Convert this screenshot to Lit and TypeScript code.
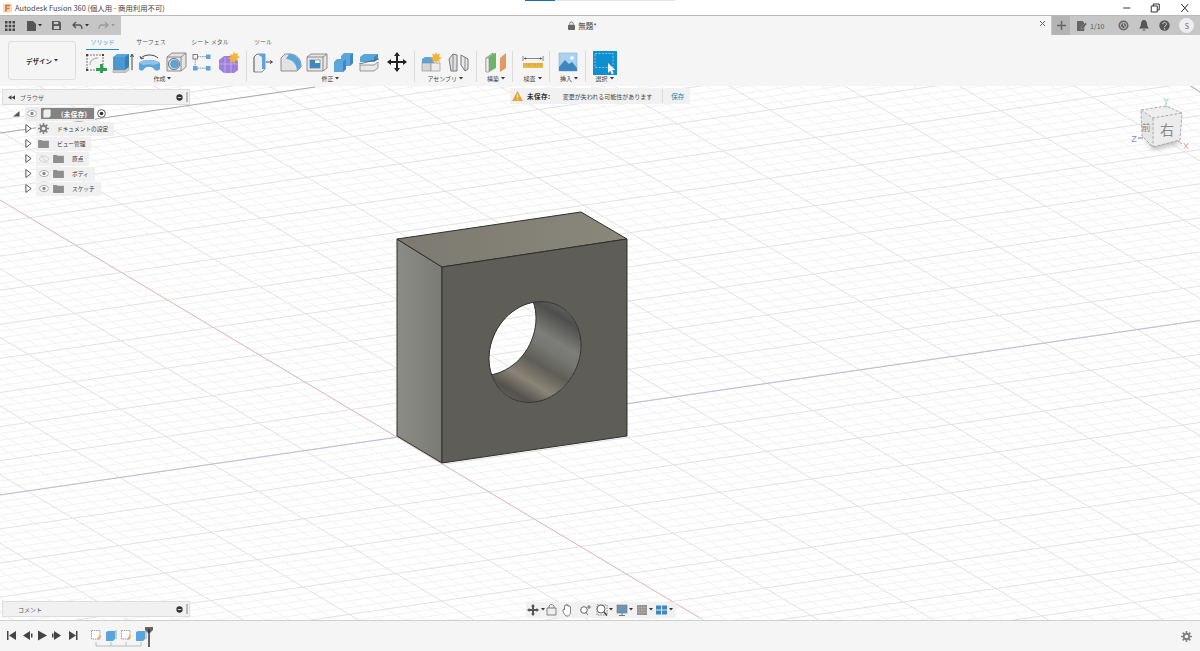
import { LitElement, html, css, svg } from 'lit';
import { customElement } from 'lit/decorators.js';

// ---- small icons, drawn to match the Fusion ribbon ----
const BLUE = '#5aa5dc';
const BLUE_D = '#3f87c0';

const icons: Record<string, unknown> = {
  sketch: svg`<rect x="2" y="4" width="16" height="15" fill="#f4f4f4" stroke="#555" stroke-width=".8" stroke-dasharray="2 1"/>
    <path d="M5 14c0-4 3-7 8-7" fill="none" stroke="#888" stroke-width=".8"/>
    <rect x="1" y="3" width="2" height="2" fill="#444"/><rect x="17" y="3" width="2" height="2" fill="#444"/><rect x="1" y="18" width="2" height="2" fill="#444"/>
    <path d="M15 13h3v4h4v3h-4v3h-3v-3h-4v-3h4z" fill="#2f9e50"/>`,
  extrude: svg`<path d="M1 6l4-3h12v13l-4 3H1z" fill="${BLUE}"/><path d="M1 6h12v13H1z" fill="#4b97d2"/><path d="M13 6l4-3v13l-4 3z" fill="#3a7fb5"/>
    <path d="M1 19h12l4-3v3l-4 3H1z" fill="#c9c9c9" stroke="#888" stroke-width=".4"/>
    <path d="M20 19V4m-1.600 2L20 3l1.600 3" fill="none" stroke="#333" stroke-width=".9"/>`,
  revolve: svg`<path d="M1 12c2-4 18-4 21 0v6c-2 2-5 2-6 0-2-3-8-3-10 0-1 2-4 2-5 0z" fill="${BLUE}"/>
    <path d="M1 12c2-2 5-3 10-3s9 1 11 3c-2 1-5 1-6 2-3-1-7-1-10 0-2-1-4-1-5-2z" fill="#8fc3e9"/>
    <path d="M3 7c4-4 13-4 17 0" fill="none" stroke="#333" stroke-width=".9"/><path d="M2 5l1 3 3-1" fill="none" stroke="#333" stroke-width=".8"/>`,
  hole: svg`<path d="M2 6l5-4h14v14l-5 4H2z" fill="#e4e4e4" stroke="#777" stroke-width=".8"/><path d="M2 6h14v14M16 6l5-4" fill="none" stroke="#777" stroke-width=".8"/>
    <circle cx="9" cy="13" r="5.600" fill="#bcd6ea" stroke="#666" stroke-width=".8"/><circle cx="9.600" cy="13" r="3.800" fill="${BLUE}" stroke="#4d7fa8" stroke-width=".5"/>`,
  pattern: svg`<rect x="2" y="3.500" width="4.500" height="4.500" fill="#f4f4f4" stroke="#666" stroke-width=".8"/><rect x="15" y="3.500" width="4.500" height="4.500" fill="${BLUE}"/>
    <rect x="2" y="15" width="4.500" height="4.500" fill="${BLUE}"/><rect x="15" y="15" width="4.500" height="4.500" fill="${BLUE}"/>
    <path d="M6.500 5.700h8.500M4.200 8v7M6.500 17.200h8.500" stroke="#777" stroke-width=".8" stroke-dasharray="1.500 .8"/>`,
  sparkle: svg`<path d="M1 9l5-4h9l5 5v9l-4 3H6l-5-4z" fill="#a07fdc"/><path d="M7 6v16M1 13h19M13 6v16" stroke="#c8b5ea" stroke-width=".8"/>
    <path d="M16 0l1.200 3 3-1-1 3 3 1.200-3 1.200 1 3-3-1L16 13l-1.200-2.600-3 1 1-3-3-1.200 3-1.200-1-3 3 1z" fill="#f4b43c"/>`,
  press: svg`<path d="M1 6l3-3h8v15l-3 3H1z" fill="#eee" stroke="#666" stroke-width=".7"/><path d="M4 3h8v15H9V6z" fill="${BLUE}"/><path d="M4 3L1 6v15" fill="none" stroke="#666" stroke-width=".7"/>
    <path d="M13 11h6m-2-1.600L19.500 11 17 12.600" fill="none" stroke="#333" stroke-width=".9"/>`,
  fillet: svg`<path d="M1 7l4-4h5c6 0 11 5 11 11v2l-4 4H1z" fill="#e2e2e2" stroke="#777" stroke-width=".8"/>
    <path d="M9 3c6 0 12 5 12 12l-4 5c0-7-5-12-11-12z" fill="${BLUE}"/>`,
  shell: svg`<path d="M1 6l4-3h16v14l-4 3H1z" fill="#e6e6e6" stroke="#777" stroke-width=".8"/><path d="M1 6h16v14M17 6l4-3" fill="none" stroke="#777" stroke-width=".8"/>
    <rect x="4" y="9" width="10" height="8" fill="#fff" stroke="#666" stroke-width=".6"/><path d="M4 9h5v3h5v5H4z" fill="${BLUE_D}"/>`,
  combine: svg`<path d="M8 5l3-3h9v10l-3 3H8z" fill="${BLUE}"/><path d="M17 15l3-3V2l-3 3z" fill="#3f87c0"/>
    <path d="M1 11l3-3h9v10l-3 3H1z" fill="${BLUE}"/><path d="M10 21l3-3V8l-3 3z" fill="#3f87c0"/>`,
  split: svg`<path d="M1 6l4-3h14v5l-4 3H1z" fill="${BLUE}"/><path d="M15 11l4-3V3l-4 3z" fill="#3f87c0"/>
    <path d="M0 13l20-5" stroke="#555" stroke-width=".8" fill="none"/>
    <path d="M1 14h14l4-3v6l-4 3H1z" fill="#e8e8e8" stroke="#777" stroke-width=".7"/>`,
  move: svg`<path d="M11 1l3 4h-2v5h5V8l4 3-4 3v-2h-5v5h2l-3 4-3-4h2v-5H5v2l-4-3 4-3v2h5V5H8z" fill="#222"/>`,
  component: svg`<path d="M1 8l3-2h9v6H1z" fill="${BLUE}"/><rect x="1" y="12" width="9" height="8" fill="#d6d6d6" stroke="#888" stroke-width=".6"/>
    <rect x="10" y="12" width="9" height="8" fill="#ececec" stroke="#888" stroke-width=".6"/>
    <path d="M15 1l1.200 2.600 2.800-1-1 2.800L21 7l-3 1.200 1 2.800-2.800-1L15 13l-1.200-3-2.800 1 1-2.800L9 7l3-1.600-1-2.800 2.800 1z" fill="#f4b43c"/>`,
  joint: svg`<path d="M1 8l4-5 4 1v16H3z" fill="#dedede" stroke="#777" stroke-width="1"/><path d="M5 3v16" stroke="#777" stroke-width=".8"/>
    <path d="M13 4l7 4v10l-3 2-4-6z" fill="#e8e8e8" stroke="#777" stroke-width="1"/><path d="M17 6v14" stroke="#777" stroke-width=".8"/>`,
  plane: svg`<path d="M1 7l7-5v15l-7 4z" fill="#9fcf8f" stroke="#777" stroke-width=".6"/><path d="M4 6l6-4h1v15l-7 4z" fill="#6db36a"/><path d="M1 7h3v14H1z" fill="#eee" stroke="#888" stroke-width=".6"/>
    <path d="M15 7l6-5v15l-6 4z" fill="#e39a62"/>`,
  measure: svg`<rect x="1" y="12" width="20" height="5" fill="#e9b84a"/><path d="M4 12v2M7 12v3M10 12v2M13 12v3M16 12v2M19 12v3" stroke="#a88428" stroke-width=".5"/>
    <path d="M1 5v5M21 5v5M2 7.500h18" fill="none" stroke="#555" stroke-width=".7"/><path d="M2 7.500l2-1.200v2.400zM20 7.500l-2-1.200v2.400z" fill="#555"/>`,
  insert: svg`<rect x="1" y="2" width="18" height="18" fill="#a9d2ef" stroke="#8ab2d0" stroke-width=".6"/><path d="M1 20v-4l6-7 4 4 3-2 5 6v3z" fill="#3f87c0"/><circle cx="14" cy="7" r="1.800" fill="#fff"/>`,
};

const caret = svg`<path d="M0 0h4L2 2.400z" fill="#333"/>`;
const folder = html`<svg viewBox="0 0 12 10" width="11" height="9"><path d="M0 1h4l1 1h7v8H0z" fill="#8e8e8e"/></svg>`;
const eye = html`<svg viewBox="0 0 12 8" width="10" height="7"><path d="M0 4c3-5 9-5 12 0-3 5-9 5-12 0z" fill="#fff" stroke="#999" stroke-width="1"/><circle cx="6" cy="4" r="2" fill="#888"/></svg>`;
const eyeOff = html`<svg viewBox="0 0 12 10" width="10" height="8"><path d="M0 5c3-5 9-5 12 0-3 5-9 5-12 0z" fill="none" stroke="#ccc" stroke-width="1"/><path d="M2 0l8 10" stroke="#ccc"/></svg>`;
const gear = html`<svg viewBox="0 0 12 12" width="11" height="11"><circle cx="6" cy="6" r="3" fill="none" stroke="#808080" stroke-width="2"/><path d="M6 0v2.400M6 9.600V12M0 6h2.400M9.600 6H12M1.800 1.800l1.700 1.700M8.500 8.500l1.700 1.700M10.200 1.800L8.500 3.500M3.500 8.500l-1.700 1.700" stroke="#808080" stroke-width="1.700"/></svg>`;
const tri = html`<svg class="tri" viewBox="0 0 8 11" width="7" height="11"><path d="M1 1l6 4.500L1 10z" fill="#fff" stroke="#444" stroke-width="1"/></svg>`;
const pin = html`<svg viewBox="0 0 8 8" width="7" height="7"><circle cx="4" cy="4" r="3.600" fill="#333"/><path d="M2 4h4" stroke="#eee" stroke-width="1"/></svg>`;

const ribbon = [
  { label: '作成', items: ['sketch', 'extrude', 'revolve', 'hole', 'pattern', 'sparkle'], cls: 'group' },
  { label: '修正', items: ['press', 'fillet', 'shell', 'combine', 'split', 'move'], cls: 'group' },
  { label: 'アセンブリ', items: ['component', 'joint'], cls: 'group' },
  { label: '構築', items: ['plane'], cls: 'group wide' },
  { label: '検査', items: ['measure'], cls: 'group wide' },
  { label: '挿入', items: ['insert'], cls: 'group wide' },
];

const tabs = [
  { label: 'ソリッド', w: 33, on: true },
  { label: 'サーフェス', w: 64, on: false },
  { label: 'シート メタル', w: 54, on: false },
  { label: 'ツール', w: 52, on: false },
];

const tree = [
  { label: 'ドキュメントの設定', eye: null, icon: gear },
  { label: 'ビュー管理', eye: null, icon: folder },
  { label: '原点', eye: eyeOff, icon: folder },
  { label: 'ボディ', eye, icon: folder },
  { label: 'スケッチ', eye, icon: folder },
];

// grid lattice, measured from the origin at the box corner
const OX = 397;
const OY = 437;
const RED = 0.597;
const BLU = -0.1455;

function gridLines(major: boolean) {
  const out: unknown[] = [];
  for (let k = -40; k <= 80; k++) {
    if ((k % 5 === 0) !== major) continue;
    const x0 = OX + (k * 92.5) / 5;
    const y0 = OY - (k * 13.45) / 5;
    out.push(svg`<line x1="-50" x2="1250" y1=${y0 + RED * (-50 - x0)} y2=${y0 + RED * (1250 - x0)}/>`);
  }
  for (let k = -70; k <= 50; k++) {
    if ((k % 5 === 0) !== major) continue;
    const x0 = OX + (k * 46) / 5;
    const y0 = OY + (k * 27.4) / 5;
    out.push(svg`<line x1="-50" x2="1250" y1=${y0 + BLU * (-50 - x0)} y2=${y0 + BLU * (1250 - x0)}/>`);
  }
  return out;
}

// the bored hole is a circle on the front face, skewed with the face
function ring(cx: number, cy: number) {
  const p: string[] = [];
  for (let i = 0; i < 72; i++) {
    const t = (i / 72) * Math.PI * 2;
    const x = cx + 46 * Math.cos(t);
    const y = cy - 6.6 * Math.cos(t) + 50 * Math.sin(t);
    p.push(`${x.toFixed(1)} ${y.toFixed(1)}`);
  }
  return `M${p.join('L')}Z`;
}

@customElement('app-root')
export class AppRoot extends LitElement {
  static styles = css`
    :host {
      display: flex;
      flex-direction: column;
      width: 1200px;
      height: 651px;
      overflow: hidden;
      background: #fff;
      font-family: 'Noto Sans CJK JP', 'Noto Sans', sans-serif;
      color: #444;
      font-size: 6px;
    }
    svg { display: block; flex: none; }
    .titlebar {
      height: 15px;
      display: flex;
      align-items: center;
      padding-left: 3px;
      font-size: 7.4px;
      position: relative;
      color: #444;
    }
    .titlebar .logo { margin-right: 3px; }
    .titlebar .progress {
      position: absolute; left: 525px; top: 0; width: 150px; height: 1px; background: #e6e6e6;
    }
    .titlebar .progress i { display: block; width: 30px; height: 1px; background: #1a6fb0; }
    .winbtns { margin-left: auto; display: flex; padding-right: 2px; }
    .winbtns svg { width: 28.5px; height: 14px; }
    .tabbar {
      height: 20px;
      background: #c6c6c6;
      display: flex;
      align-items: stretch;
      border-top: 1px solid #bbb;
      box-sizing: border-box;
    }
    .tabbar .tools { width: 121px; display: flex; align-items: center; padding-left: 5px; box-sizing: border-box; }
    .doc {
      width: 930px;
      background: #f5f5f5;
      display: flex;
      align-items: center;
      position: relative;
      justify-content: center;
      font-size: 7.5px;
      gap: 3px;
      padding-right: 7px;
      box-sizing: border-box;
    }
    .doc .x { position: absolute; right: 5px; top: 4px; }
    .plus { width: 18px; margin-left: 1px; background: #b4b4b4; display: flex; align-items: center; justify-content: center; }
    .status { flex: 1; display: flex; align-items: center; padding-left: 7px; color: #555; font-size: 7px; }
    .status .clock { margin-left: 14px; }
    .status .next { margin-left: 10px; }
    .avatar {
      width: 15px; height: 15px; border-radius: 50%; background: #eee; color: #666;
      display: flex; align-items: center; justify-content: center; font-size: 7px; margin-left: 9px;
    }
    .toolbar {
      height: 51px;
      background: #f5f5f5;
      display: flex;
      box-sizing: border-box;
    }
    .design {
      width: 68px; height: 39px; margin: 6px 0 0 8px; flex: none;
      border: 1px solid #dedede; border-radius: 3px; box-sizing: border-box;
      display: flex; align-items: center; justify-content: center; gap: 2px;
      font-weight: 700; font-size: 6.5px; color: #333;
    }
    .ribbon { margin-left: 3px; display: flex; flex-direction: column; }
    .tabs { display: flex; margin-left: 7px; height: 15px; }
    .tab { text-align: center; line-height: 13px; font-size: 6px; color: #555; box-sizing: border-box; height: 15px; }
    .tab.on { color: #3a9ac8; border-bottom: 1.5px solid #2b8cba; }
    .groups { display: flex; height: 34px; padding-top: 1px; box-sizing: border-box; }
    .group {
      padding: 0 6px;
      border-right: 1px solid #dcdcdc;
      display: flex;
      flex-direction: column;
      height: 31px;
    }
    .group.wide { padding: 0 5px 0 8.5px; }
    .group.last { border-right: none; padding-left: 6.5px; }
    .icons { display: flex; gap: 4.6px; height: 22px; }
    .icons svg { width: 22px; height: 22px; }
    .glabel {
      margin-top: 1px; display: flex; align-items: center; justify-content: center; gap: 2px;
      height: 9px; font-size: 6px; color: #444; white-space: nowrap;
    }
    .glabel.tight { margin-top: -1px; }
    .select {
      width: 24px; height: 24px; background: #0f8fd0; position: relative;
    }
    .canvas { flex: 1; position: relative; overflow: hidden; background: #fff; }
    .scene { position: absolute; left: 0; top: 0; }
    .minor { stroke: #f2f2f2; stroke-width: 1; }
    .major { stroke: #e2e2e2; stroke-width: 1; }
    .panel {
      position: absolute;
      left: 2px;
      width: 188px;
      height: 16px;
      background: #f1f1f1;
      border: 1px solid #ddd;
      box-sizing: border-box;
      display: flex;
      align-items: center;
      padding: 0 1px 0 5px;
      font-size: 6px;
      color: #555;
    }
    .panel.browser { top: 3px; }
    .panel.comment { bottom: 3px; padding-left: 15px; }
    .panel .end { margin-left: auto; display: flex; align-items: center; gap: 3px; }
    .panel .grip { width: 2px; height: 10px; background: #bbb; }
    .panel .rew { margin-right: 5px; }
    .tree { position: absolute; left: 0; top: 20px; display: flex; flex-direction: column; }
    .root { display: flex; align-items: center; height: 15px; padding-left: 13px; }
    .root .wrap { display: flex; align-items: center; background: #ececec; height: 14px; margin-left: 5px; padding: 0 1px 0 2px; }
    .root .sel {
      width: 53px; height: 11px; background: #838383; color: #fff; display: flex; align-items: center;
      font-weight: 700; font-size: 6.5px; letter-spacing: .4px; margin-left: 4px; padding-left: 2px; box-sizing: border-box; gap: 10px;
      white-space: nowrap;
    }
    .root .radio { margin-left: 2px; }
    .row { display: flex; align-items: center; height: 15px; padding-left: 25px; }
    .row .cell {
      margin-left: 4px; height: 14px; background: #f0f0f0; display: flex; align-items: center;
      padding-right: 6px; color: #333; font-size: 5.7px; white-space: nowrap;
    }
    .slot { width: 15px; display: flex; justify-content: center; }
    .cell .txt { margin-left: 6px; }
    .warn {
      position: absolute; left: 510px; top: 2px; height: 16px; width: 180px;
      background: #f1f1f1; display: flex; align-items: center; padding-left: 2px; box-sizing: border-box;
      font-size: 6px; color: #444; white-space: nowrap;
    }
    .warn b { margin-left: 4px; font-size: 6.5px; letter-spacing: .5px; color: #333; }
    .warn .msg { margin-left: 12px; }
    .warn .save { margin-left: 10px; border-left: 1px solid #dcdcdc; padding-left: 8px; color: #1f7ea8; line-height: 14px; font-size: 6.5px; }
    .nav {
      position: absolute; left: 526px; bottom: 2px; width: 150px; height: 16px;
      background: #f1f1f1; display: flex; align-items: center;
    }
    .cube { position: absolute; left: 1125px; top: 8px; }
    .timeline {
      height: 31px;
      background: #f5f5f5;
      border-top: 1px solid #cfcfcf;
      box-sizing: border-box;
      display: flex;
      align-items: center;
      position: relative;
    }
    .timeline .gearbtn { margin-left: auto; margin-right: 8px; }
    .ml2 { margin-left: 2px; }
    .ml9 { margin-left: 9px; }
    .ml10 { margin-left: 10px; }
    .ml11 { margin-left: 11px; }
    .ml12 { margin-left: 12px; }
    .ml3 { margin-left: 3px; }
  `;

  private _ribbon() {
    return html`<div class="groups">
      ${ribbon.map(
        (g) => html`<div class=${g.cls}>
          <div class="icons">
            ${g.items.map((n) => html`<svg viewBox="0 0 22 22">${icons[n]}</svg>`)}
          </div>
          <div class="glabel">${g.label}<svg viewBox="0 0 4 3" width="4" height="3">${caret}</svg></div>
        </div>`,
      )}
      <div class="group wide last">
        <div class="select">
          <svg viewBox="0 0 24 24" width="24" height="24">
            <rect x="2" y="2.500" width="18" height="14" fill="none" stroke="#9bd6f2" stroke-width=".8" stroke-dasharray="2 1.400"/>
            <path d="M15 12v10l2.400-2.200 1.500 3.600 1.800-.8-1.500-3.400 3-.2z" fill="#fff"/>
          </svg>
        </div>
        <div class="glabel tight">選択<svg viewBox="0 0 4 3" width="4" height="3">${caret}</svg></div>
      </div>
    </div>`;
  }

  private _scene() {
    const outer = ring(535, 352);
    const far = ring(490, 325);
    return html`<svg class="scene" width="1200" height="534" viewBox="0 86 1200 534">
      <defs>
        <linearGradient id="bore" gradientUnits="userSpaceOnUse" x1="570" y1="300" x2="503" y2="411">
          <stop offset="0" stop-color="#6f6f69"/>
          <stop offset=".15" stop-color="#4e4f4d"/>
          <stop offset=".33" stop-color="#7d7d79"/>
          <stop offset=".42" stop-color="#767672"/>
          <stop offset=".55" stop-color="#5f5d56"/>
          <stop offset=".70" stop-color="#8a8577"/>
          <stop offset=".83" stop-color="#54524c"/>
          <stop offset="1" stop-color="#6f6d65"/>
        </linearGradient>
        <linearGradient id="side" x1="0" x2="1" y1="0" y2="0">
          <stop offset="0" stop-color="#8b8c86"/><stop offset="1" stop-color="#7b7b75"/>
        </linearGradient>
        <linearGradient id="top" x1="0" x2="1" y1="0" y2="0">
          <stop offset="0" stop-color="#7c7a70"/><stop offset="1" stop-color="#8a877b"/>
        </linearGradient>
        <clipPath id="boreclip"><path d=${outer}/></clipPath>
      </defs>
      <g class="minor">${gridLines(false)}</g>
      <g class="major">${gridLines(true)}</g>
      <path d="M0 133L315 87" stroke="#a8a8a8" fill="none"/>
      <path d="M1191 86l9 6" stroke="#a8a8a8" fill="none"/>
      <path d="M0 200L700 618" stroke="#e2bcbc" fill="none"/>
      <path d="M0 495L1200 320.500" stroke="#bcbcdc" fill="none"/>
      <path d=${outer + far} fill="url(#bore)" fill-rule="evenodd" clip-path="url(#boreclip)"/>
      <path d=${far} fill="none" stroke="#333" stroke-width="1" clip-path="url(#boreclip)"/>
      <g stroke="#2f2f2b" stroke-width="1" stroke-linejoin="round">
        <path d="M397 239L442 267V463L397 436Z" fill="url(#side)"/>
        <path d="M397 239L581 212L627 239L442 267Z" fill="url(#top)"/>
        <path d="M442 267L627 239V436L442 463Z ${outer}" fill="#5e5d57" fill-rule="evenodd"/>
      </g>
    </svg>`;
  }

  private _cube() {
    return svg`<svg class="cube" width="66" height="62" viewBox="1125 94 66 62">
      <defs><filter id="sh" x="-30%" y="-30%" width="160%" height="160%"><feGaussianBlur stdDeviation="2.500"/></filter></defs>
      <path d="M1145 137l8 13 27-7-4-6z" fill="#bbb" filter="url(#sh)"/>
      <path d="M1141 110l25-4 16 7-29 5z" fill="#efefef"/>
      <path d="M1141 110l12 8v29l-11-11z" fill="#e6e6e6"/>
      <path d="M1153 118l29-5-2 27-27 7z" fill="#ececec"/>
      <g fill="none" stroke="#999" stroke-width=".8" stroke-dasharray="3 1.500">
        <path d="M1141 110l25-4 16 7-2 27-27 7-11-11z"/><path d="M1141 110l12 8 29-5M1153 118v29"/>
      </g>
      <text x="1167" y="135" font-size="14" fill="#888" text-anchor="middle" font-family="Noto Sans CJK JP">右</text>
      <text x="1146" y="131" font-size="9" fill="#888" text-anchor="middle" font-family="Noto Sans CJK JP">前</text>
      <path d="M1166 108V103" stroke="#8fdc8f"/><text x="1166" y="104" font-size="9" fill="#9fdf9f" text-anchor="middle" font-family="Liberation Sans">Y</text>
      <path d="M1138 138h5" stroke="#7a7ac8"/><text x="1134" y="142" font-size="9" fill="#8a8ad0" text-anchor="middle" font-family="Liberation Sans">Z</text>
      <path d="M1178 141l4 3" stroke="#e89a9a"/><text x="1186" y="149" font-size="9" fill="#e89a9a" text-anchor="middle" font-family="Liberation Sans">X</text>
    </svg>`;
  }

  private _nav() {
    return html`<svg width="150" height="16" viewBox="0 0 150 16">
      <path d="M7 2l2 2.500H8V7h2.500V6L13 8l-2.500 2V9H8v2.500h1L7 14l-2-2.500h1V9H3.500v1L1 8l2.500-2v1H6V4.500H5z" fill="#555"/>
      <g transform="translate(15 6)">${caret}</g>
      <path d="M21 6h9v7h-9zM23 6V4l1.500-1.500h2L28 4v2" fill="#eee" stroke="#777" stroke-width=".9"/>
      <path d="M40 14c-2-2-3-4-3-6 0-1 1-1 1.500 0V4c0-1 1.500-1 1.500 0V3c0-1 1.500-1 1.500 0v1c0-1 1.500-1 1.500 0v1c0-1 1.500-1 1.500 0v5c0 2-1 3-2 4z" fill="#fff" stroke="#666" stroke-width=".8"/>
      <circle cx="58" cy="8" r="3.300" fill="#fff" stroke="#666"/><path d="M60 10.500l2 2.500M63 3v4M61 5h4" stroke="#666" stroke-width=".9"/>
      <rect x="71" y="3" width="10" height="10" fill="none" stroke="#888" stroke-dasharray="1.500 1"/><circle cx="75" cy="7" r="4" fill="#fff" stroke="#666"/><path d="M78 10l3 3.500" stroke="#444" stroke-width="1.300"/>
      <g transform="translate(83 6)">${caret}</g>
      <rect x="91" y="3" width="10" height="8" fill="#6c94b4" stroke="#777" stroke-width=".6"/><path d="M96 11v2M93 13.500h6" stroke="#777"/>
      <g transform="translate(103 6)">${caret}</g>
      <rect x="111" y="3" width="10" height="10" fill="#8e8e8e"/><path d="M113 3v10M115.500 3v10M118 3v10M111 5.500h10M111 8h10M111 10.500h10" stroke="#bbb" stroke-width=".5"/>
      <g transform="translate(123 6)">${caret}</g>
      <rect x="130" y="3.500" width="11" height="9" fill="${BLUE_D}"/><path d="M135.500 3.500v9M130 8h11" stroke="#dcecf7"/>
      <g transform="translate(143 6)">${caret}</g>
    </svg>`;
  }

  private _timeline() {
    const tl = (x: number, kind: 'sk' | 'ex') =>
      kind === 'sk'
        ? svg`<g transform="translate(${x} 9)"><rect x=".5" y=".5" width="8.500" height="8.500" fill="#fff" stroke="#666" stroke-width=".6" stroke-dasharray="1.500 .8"/><path d="M6 9l3-4 1 1-3 4z" fill="#e8a33c"/></g>`
        : svg`<g transform="translate(${x} 9)"><path d="M0 2l2-1h7v8l-2 2H0z" fill="${BLUE}"/><path d="M10 0v9" stroke="#666" stroke-width=".6"/></g>`;
    return html`<svg width="160" height="30" viewBox="0 0 160 30">
      <g fill="#444">
        <path d="M7 10v9h1.500v-9zM16 10v9l-7-4.500z"/>
        <path d="M30 10v9l-7-4.500zM31 12.500h1.500v4H31z"/>
        <path d="M38 9.500v10l9-5z"/>
        <path d="M54 10v9l7-4.500zM52 12.500h1.500v4H52z"/>
        <path d="M69 10v9l7-4.500zM76 10h1.500v9H76z"/>
      </g>
      ${tl(91, 'sk')}${tl(106, 'ex')}${tl(121, 'sk')}${tl(136, 'ex')}
      <path d="M96 21v4h45v-4M111 21v4M126 21v4" fill="none" stroke="#bbb"/>
      <path d="M145 6h8v3l-3 3h-2l-3-3z" fill="#666"/><path d="M149 8v18" stroke="#333" stroke-width="1.500"/>
    </svg>`;
  }

  render() {
    return html`
      <div class="titlebar">
        <svg class="logo" viewBox="0 0 10 10" width="9" height="10"><rect width="10" height="10" fill="#f7d9bd"/><path d="M2.500 1.500h5.500v1.500H4.300v1.800h3v1.400h-3V9H2.500z" fill="#d9722a"/></svg>
        Autodesk Fusion 360 (個人用 - 商用利用不可)
        <div class="progress"><i></i></div>
        <div class="winbtns">
          <svg viewBox="0 0 28 14"><path d="M10 7h7" stroke="#333"/></svg>
          <svg viewBox="0 0 28 14"><path d="M10 5h6v6h-6zM12 5V3h6v6h-2" fill="none" stroke="#333"/></svg>
          <svg viewBox="0 0 28 14"><path d="M11 3l7 8M18 3l-7 8" stroke="#333"/></svg>
        </div>
      </div>
      <div class="tabbar">
        <div class="tools">
          <svg viewBox="0 0 10 10" width="10" height="10"><path d="M0 0h2.500v2.500H0zM3.700 0h2.500v2.500H3.700zM7.500 0H10v2.500H7.500zM0 3.700h2.500v2.500H0zM3.700 3.700h2.500v2.500H3.700zM7.500 3.700H10v2.500H7.500zM0 7.500h2.500V10H0zM3.700 7.500h2.500V10H3.700zM7.500 7.500H10V10H7.500z" fill="#444"/></svg>
          <svg class="ml12" viewBox="0 0 9 10" width="9" height="10"><path d="M0 0h6l3 3v7H0z" fill="#555"/></svg>
          <svg class="ml2" viewBox="0 0 4 3" width="4" height="3">${caret}</svg>
          <svg class="ml10" viewBox="0 0 10 10" width="9" height="9"><path d="M0 0h8l2 2v8H0z" fill="#555"/><rect x="2" y="1" width="5" height="2.500" fill="#ccc"/><rect x="2" y="5.500" width="6" height="3.500" fill="#ccc"/></svg>
          <svg class="ml11" viewBox="0 0 11 9" width="11" height="9"><path d="M4 1L1 4l3 3M1 4h6c2 0 3 1 3 4" fill="none" stroke="#555" stroke-width="1.300"/></svg>
          <svg class="ml2" viewBox="0 0 4 3" width="4" height="3">${caret}</svg>
          <svg class="ml9" viewBox="0 0 11 9" width="11" height="9"><path d="M7 1l3 3-3 3M10 4H4C2 4 1 5 1 8" fill="none" stroke="#999" stroke-width="1.300"/></svg>
          <svg class="ml2" viewBox="0 0 4 3" width="4" height="3"><path d="M0 0h4L2 2.400z" fill="#999"/></svg>
        </div>
        <div class="doc">
          <svg viewBox="0 0 8 10" width="7" height="9"><path d="M2 4V3a2 2 0 014 0v1" fill="none" stroke="#666"/><rect y="4" width="8" height="6" rx="1" fill="#666"/></svg>
          無題*
          <svg class="x" viewBox="0 0 7 7" width="7" height="7"><path d="M1 1l5 5M6 1L1 6" stroke="#666"/></svg>
        </div>
        <div class="plus"><svg viewBox="0 0 9 9" width="9" height="9"><path d="M4.500 0v9M0 4.500h9" stroke="#666" stroke-width="1.500"/></svg></div>
        <div class="status">
          <svg viewBox="0 0 11 11" width="10" height="10"><path d="M0 0h6l2 2v9H0z" fill="#666"/><path d="M4 8l5-6 2 1-5 6z" fill="#555" stroke="#c6c6c6" stroke-width=".5"/></svg>
          <span class="ml3">1/10</span>
          <svg class="clock" viewBox="0 0 11 11" width="11" height="11"><circle cx="5.500" cy="5.500" r="5" fill="#666"/><circle cx="5.500" cy="5.500" r="3" fill="none" stroke="#ddd" stroke-width=".8"/><path d="M5.500 3.500v2l1.500 1" stroke="#ddd" stroke-width=".7" fill="none"/></svg>
          <svg class="next" viewBox="0 0 10 11" width="10" height="11"><path d="M5 0c2 0 3 2 3 4 0 2 1 3 2 4.500H0C1 7 2 6 2 4c0-2 1-4 3-4zM3.500 9.500h3C6.500 11 3.500 11 3.500 9.500z" fill="#555"/></svg>
          <svg class="next" viewBox="0 0 11 11" width="11" height="11"><circle cx="5.500" cy="5.500" r="5.200" fill="#555"/><path d="M3.700 4.200c0-2.400 3.800-2.400 3.800 0 0 1.500-2 1.300-2 3" fill="none" stroke="#ddd" stroke-width="1"/><circle cx="5.500" cy="8.700" r=".7" fill="#ddd"/></svg>
          <div class="avatar">S</div>
        </div>
      </div>
      <div class="toolbar">
        <div class="design">デザイン<svg viewBox="0 0 4 3" width="4" height="3">${caret}</svg></div>
        <div class="ribbon">
          <div class="tabs">
            ${tabs.map(
              (t) => html`<div class="tab ${t.on ? 'on' : ''}" style="width:${t.w}px">${t.label}</div>`,
            )}
          </div>
          ${this._ribbon()}
        </div>
      </div>
      <div class="canvas">
        ${this._scene()}
        <div class="panel browser">
          <svg class="rew" viewBox="0 0 8 5" width="7" height="5"><path d="M4 0v5L0 2.500zM8 0v5L4 2.500z" fill="#444"/></svg>
          ブラウザ
          <div class="end">${pin}<div class="grip"></div></div>
        </div>
        <div class="tree">
          <div class="root">
            <svg viewBox="0 0 8 7" width="7" height="6"><path d="M7.500 0v6.500H0z" fill="#555"/></svg>
            <div class="wrap">
              ${eye}
              <div class="sel">
                <svg viewBox="0 0 9 10" width="8" height="9"><path d="M0 2l2-2h7v8l-2 2H0z" fill="#eee" stroke="#333" stroke-width=".5"/></svg>
                (未保存)
              </div>
            </div>
            <svg class="radio" viewBox="0 0 10 10" width="9" height="9"><circle cx="5" cy="5" r="4.300" fill="#fff" stroke="#333" stroke-width=".9"/><circle cx="5" cy="5" r="2" fill="#333"/></svg>
          </div>
          ${tree.map(
            (r) => html`<div class="row">
              ${tri}
              <div class="cell">
                ${r.eye ? html`<div class="slot">${r.eye}</div>` : ''}
                <div class="slot">${r.icon}</div>
                <span class="txt">${r.label}</span>
              </div>
            </div>`,
          )}
        </div>
        <div class="warn">
          <svg viewBox="0 0 12 11" width="11" height="10"><path d="M6 0l6 11H0z" fill="#e8a33c"/><path d="M6 3.500v4" stroke="#fff" stroke-width="1.200"/><circle cx="6" cy="9.200" r=".7" fill="#fff"/></svg>
          <b>未保存:</b>
          <span class="msg">変更が失われる可能性があります</span>
          <span class="save">保存</span>
        </div>
        ${this._cube()}
        <div class="panel comment">
          コメント
          <div class="end">${pin}<div class="grip"></div></div>
        </div>
        <div class="nav">${this._nav()}</div>
      </div>
      <div class="timeline">
        ${this._timeline()}
        <div class="gearbtn">${gear}</div>
      </div>
    `;
  }
}
